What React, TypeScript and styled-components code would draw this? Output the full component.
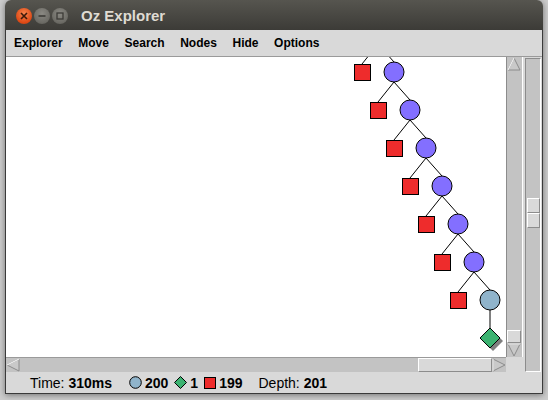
import React from 'react';
import styled, { createGlobalStyle } from 'styled-components';

const GlobalStyle = createGlobalStyle`
  html, body {
    margin: 0;
    padding: 0;
    background: #cdcdcd;
  }
  body {
    width: 548px;
    height: 400px;
    overflow: hidden;
  }
`;

const Page = styled.div`
  display: flex;
  padding: 0 5px 0 5px;
  width: 548px;
  height: 400px;
  box-sizing: border-box;
`;

const Window = styled.div`
  display: flex;
  flex-direction: column;
  width: 538px;
  height: 394px;
  box-shadow: 0 1px 6px rgba(0, 0, 0, 0.45);
  border-radius: 6px 6px 0 0;
`;

const TitleBar = styled.div`
  display: flex;
  align-items: center;
  height: 30px;
  padding-left: 11px;
  background: linear-gradient(#56554f, #3c3b37);
  border-radius: 6px 6px 0 0;
`;

const WinButtons = styled.div`
  display: flex;
  gap: 2px;
  margin-top: 1px;
`;

const WinButton = styled.div<{ $close?: boolean }>`
  display: flex;
  align-items: center;
  justify-content: center;
  width: 16px;
  height: 16px;
  border-radius: 50%;
  background: ${(p) =>
    p.$close
      ? 'radial-gradient(circle at 50% 35%, #f7844c, #dd4814 70%, #b93a0e)'
      : 'radial-gradient(circle at 50% 35%, #8a8983, #6b6a64 70%, #56554f)'};
`;

const Title = styled.div`
  margin-left: 13px;
  font-family: 'Liberation Sans', Arial, sans-serif;
  font-weight: bold;
  font-size: 15px;
  color: #dfdbd2;
`;

const Frame = styled.div`
  display: flex;
  flex-direction: column;
  flex: 1;
  background: #d9d9d9;
  border-left: 1px solid #3a3a3a;
  border-right: 1px solid #3a3a3a;
  border-bottom: 1px solid #3a3a3a;
`;

const MenuBar = styled.div`
  display: flex;
  align-items: center;
  height: 26px;
  border-bottom: 1px solid #9a9a9a;
  background: #d9d9d9;
`;

const MenuItem = styled.div`
  padding: 0 7.6px 0 8px;
  font-family: 'Liberation Sans', Arial, sans-serif;
  font-weight: bold;
  font-size: 12px;
  color: #000;
`;

const Body = styled.div`
  display: flex;
  height: 315px;
`;

const ScrollArea = styled.div`
  display: flex;
  flex-direction: column;
  width: 517px;
`;

const CanvasRow = styled.div`
  display: flex;
  height: 300px;
`;

const Canvas = styled.div`
  width: 500px;
  height: 300px;
  background: #fff;
  overflow: hidden;
`;

const VScroll = styled.div`
  display: flex;
  flex-direction: column;
  width: 15px;
  background: #c3c3c3;
  border-left: 1px solid #8c8c8c;
  border-right: 1px solid #fff;
`;

const ScrollTrack = styled.div<{ $horizontal?: boolean }>`
  display: flex;
  flex: 1;
  flex-direction: ${(p) => (p.$horizontal ? 'row' : 'column')};
  justify-content: flex-end;
`;

const Thumb = styled.div<{ $w: number; $h: number }>`
  width: ${(p) => p.$w}px;
  height: ${(p) => p.$h}px;
  box-sizing: border-box;
  background: #d9d9d9;
  border-top: 1px solid #fff;
  border-left: 1px solid #fff;
  border-right: 1px solid #8c8c8c;
  border-bottom: 1px solid #8c8c8c;
`;

const HScroll = styled.div`
  display: flex;
  width: 500px;
  height: 14px;
  background: #c3c3c3;
  border-top: 1px solid #9a9a9a;
`;

const ScaleColumn = styled.div`
  display: flex;
  padding: 1px 1px 0 2px;
`;

const ScaleTrough = styled.div`
  display: flex;
  flex-direction: column;
  width: 14px;
  padding-top: 139px;
  background: #c3c3c3;
  border-left: 1px solid #8c8c8c;
  border-top: 1px solid #8c8c8c;
  border-right: 1px solid #fff;
  border-bottom: 1px solid #fff;
`;

const ScaleHalf = styled(Thumb)`
  margin-left: 1px;
`;

const StatusBar = styled.div`
  display: flex;
  align-items: center;
  height: 21px;
  padding-left: 24px;
  font-family: 'Liberation Sans', Arial, sans-serif;
  font-size: 14px;
  color: #000;
`;

const Bold = styled.b`
  font-weight: bold;
`;

const Counts = styled.div`
  display: flex;
  align-items: center;
  gap: 6px;
  margin: 0 16px 0 17px;
`;

const Count = styled.span`
  display: flex;
  align-items: center;
  gap: 3px;
  font-weight: bold;
`;

const Arrow = ({ dir }: { dir: 'up' | 'down' | 'left' | 'right' }) => {
  const pts: Record<string, string> = {
    up: '7,1 1,13 13,13',
    down: '1,1 13,1 7,13',
    left: '1,7 13,1 13,13',
    right: '1,1 13,7 1,13',
  };
  return (
    <svg width="14" height="14" viewBox="0 0 14 14" style={{ display: 'block', flex: 'none' }}>
      <polygon points={pts[dir]} fill="#c9c9c9" stroke="#8c8c8c" strokeWidth="1" />
      {dir === 'up' && <line x1="7" y1="1" x2="1" y2="13" stroke="#fff" />}
      {dir === 'left' && <line x1="1" y1="7" x2="13" y2="1" stroke="#fff" />}
      {dir === 'down' && <line x1="1" y1="1" x2="13" y2="1" stroke="#fff" />}
      {dir === 'right' && <line x1="1" y1="1" x2="1" y2="13" stroke="#fff" />}
    </svg>
  );
};

const PURPLE = '#836fff';
const RED = '#ee2c2c';
const GREEN = '#3cb371';
const STEEL = '#90b4cb';

const rows = Array.from({ length: 7 }, (_, i) => ({
  px: 378 + 16 * i,
  py: 34 + 38 * i,
  cx: 394 + 16 * i,
  sx: 362 + 16 * i,
  y: 72 + 38 * i,
}));

const Tree = () => (
  <svg width="500" height="300" viewBox="6 57 500 300" style={{ display: 'block' }}>
    {rows.map((r, i) => (
      <g key={i}>
        <line x1={r.px} y1={r.py + 10} x2={r.sx} y2={r.y - 8} stroke="#000" />
        <line x1={r.px} y1={r.py + 10} x2={r.cx} y2={r.y - 10} stroke="#000" />
      </g>
    ))}
    <line x1={490} y1={310} x2={490} y2={328} stroke="#000" />
    {rows.map((r, i) => (
      <g key={i}>
        <rect x={r.sx - 8} y={r.y - 8} width="16" height="16" fill={RED} stroke="#000" shapeRendering="crispEdges" />
        <circle cx={r.cx} cy={r.y} r="10" fill={i === 6 ? STEEL : PURPLE} stroke="#000" />
      </g>
    ))}
    <polygon points="493,331 503,341 493,351 483,341" fill="#7f7f7f" />
    <polygon points="490,328 500,338 490,348 480,338" fill={GREEN} stroke="#000" />
  </svg>
);

const menus = ['Explorer', 'Move', 'Search', 'Nodes', 'Hide', 'Options'];

export default function App() {
  return (
    <>
      <GlobalStyle />
      <Page>
        <Window>
          <TitleBar>
            <WinButtons>
              <WinButton $close>
                <svg width="8" height="8" viewBox="0 0 8 8">
                  <path d="M1 1 L7 7 M7 1 L1 7" stroke="#3c1a0a" strokeWidth="1.6" />
                </svg>
              </WinButton>
              <WinButton>
                <svg width="8" height="8" viewBox="0 0 8 8">
                  <path d="M0.5 4 H7.5" stroke="#3c3b37" strokeWidth="1.6" />
                </svg>
              </WinButton>
              <WinButton>
                <svg width="8" height="8" viewBox="0 0 8 8">
                  <rect x="1" y="1" width="6" height="6" fill="none" stroke="#3c3b37" strokeWidth="1.3" />
                </svg>
              </WinButton>
            </WinButtons>
            <Title>Oz Explorer</Title>
          </TitleBar>
          <Frame>
            <MenuBar>
              {menus.map((m) => (
                <MenuItem key={m}>{m}</MenuItem>
              ))}
            </MenuBar>
            <Body>
              <ScrollArea>
                <CanvasRow>
                  <Canvas>
                    <Tree />
                  </Canvas>
                  <VScroll>
                    <Arrow dir="up" />
                    <ScrollTrack>
                      <Thumb $w={14} $h={13} />
                    </ScrollTrack>
                    <Arrow dir="down" />
                  </VScroll>
                </CanvasRow>
                <HScroll>
                  <Arrow dir="left" />
                  <ScrollTrack $horizontal>
                    <Thumb $w={74} $h={14} />
                  </ScrollTrack>
                  <Arrow dir="right" />
                </HScroll>
              </ScrollArea>
              <ScaleColumn>
                <ScaleTrough>
                  <ScaleHalf $w={13} $h={15} />
                  <ScaleHalf $w={13} $h={15} />
                </ScaleTrough>
              </ScaleColumn>
            </Body>
            <StatusBar>
              <span>
                Time: <Bold>310ms</Bold>
              </span>
              <Counts>
                <Count>
                  <svg width="13" height="13" viewBox="0 0 13 13">
                    <circle cx="6.5" cy="6.5" r="5.8" fill={STEEL} stroke="#000" />
                  </svg>
                  200
                </Count>
                <Count>
                  <svg width="13" height="13" viewBox="0 0 13 13">
                    <polygon points="6.5,0.5 12.5,6.5 6.5,12.5 0.5,6.5" fill={GREEN} stroke="#000" />
                  </svg>
                  1
                </Count>
                <Count>
                  <svg width="12" height="12" viewBox="0 0 12 12">
                    <rect x="0.5" y="0.5" width="11" height="11" fill={RED} stroke="#000" />
                  </svg>
                  199
                </Count>
              </Counts>
              <span>
                Depth: <Bold>201</Bold>
              </span>
            </StatusBar>
          </Frame>
        </Window>
      </Page>
    </>
  );
}
